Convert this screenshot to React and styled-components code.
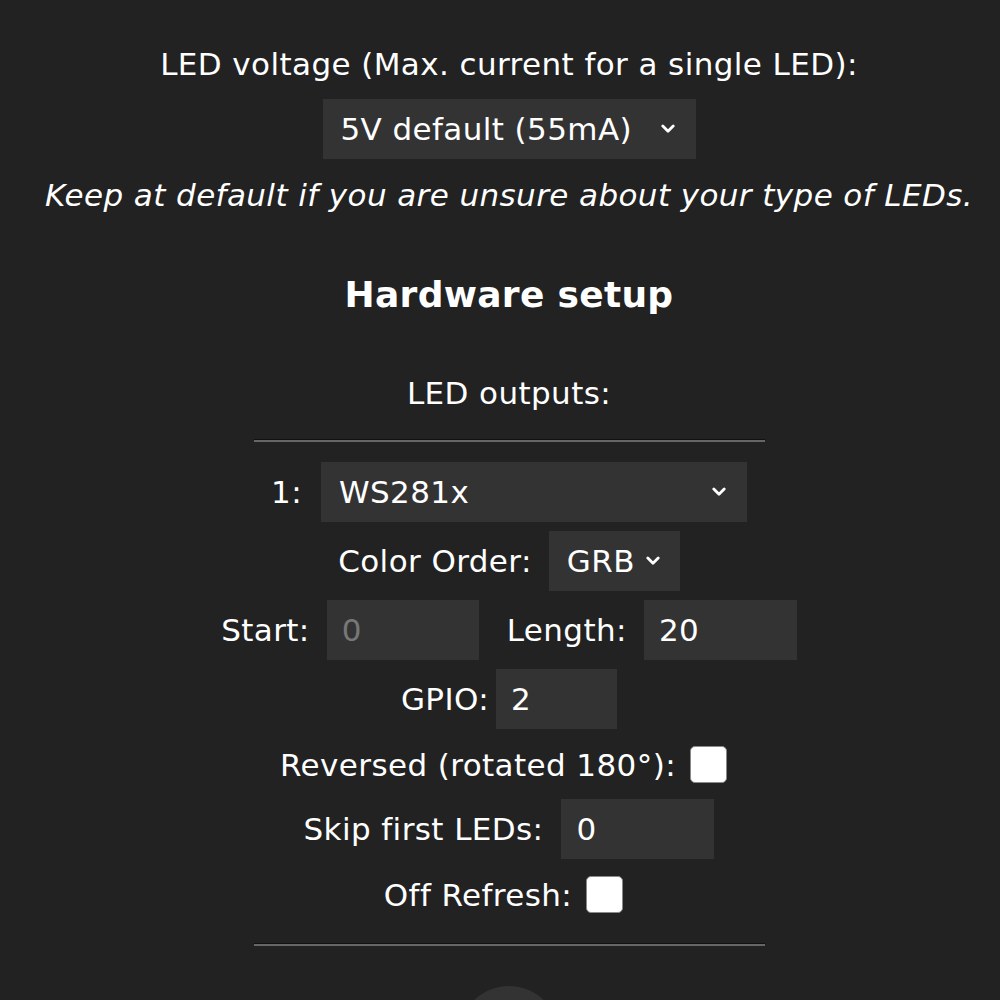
import React from "react";
import styled, { createGlobalStyle } from "styled-components";

const Global = createGlobalStyle`
  html, body { margin: 0; padding: 0; background: #222; }
  body {
    color: #fff;
    font-family: "DejaVu Sans", Verdana, "Liberation Sans", sans-serif;
    font-size: 31px;
    letter-spacing: 0.4px;
    overflow: hidden;
  }
`;

const Page = styled.div`
  width: 1000px;
  height: 1000px;
  box-sizing: border-box;
  padding: 46px 0 0 18px;
  display: flex;
  flex-direction: column;
  align-items: center;
  overflow: hidden;
`;

const Text = styled.div`
  line-height: 36px;
  text-align: center;
  white-space: nowrap;
  margin-top: ${(p) => p.$mt || 0}px;
  font-style: ${(p) => (p.$italic ? "italic" : "normal")};
`;

const Heading = styled.h3`
  margin: ${(p) => p.$mt || 0}px 0 0;
  font-size: 36px;
  letter-spacing: 0.3px;
  line-height: 42px;
  font-weight: bold;
`;

const Rule = styled.hr`
  width: 511px;
  height: 0;
  margin: ${(p) => p.$mt || 0}px 0 0;
  border: none;
  border-top: 1px solid #111;
  border-bottom: 2px solid #666;
`;

const Row = styled.div`
  display: flex;
  align-items: center;
  justify-content: center;
  margin-top: ${(p) => p.$mt ?? 9}px;
  white-space: nowrap;
`;

const Label = styled.span`
  margin-right: ${(p) => p.$gap ?? 17}px;
  margin-left: ${(p) => p.$lead || 0}px;
`;

const Select = styled.div`
  display: flex;
  align-items: center;
  justify-content: space-between;
  box-sizing: border-box;
  width: ${(p) => p.$w}px;
  height: 60px;
  padding: 0 ${(p) => p.$pr ?? 21}px 0 ${(p) => p.$pl ?? 18}px;
  background: #333;
  color: #fff;
`;

const Field = styled.input`
  box-sizing: border-box;
  width: ${(p) => p.$w}px;
  height: 60px;
  padding: 0 15px;
  border: none;
  outline: none;
  background: #333;
  color: ${(p) => (p.disabled ? "#777" : "#fff")};
  font-family: inherit;
  font-size: 31px;
  letter-spacing: 0.4px;
`;

const Check = styled.input`
  appearance: none;
  box-sizing: border-box;
  width: 37px;
  height: 37px;
  margin: 8px 11px 8px 0;
  background: #fff;
  border: 1px solid #8a8a8a;
  border-radius: 5px;
`;

const RoundButton = styled.button`
  margin-top: 40px;
  width: 100px;
  height: 100px;
  flex-shrink: 0;
  border: none;
  border-radius: 50%;
  background: #333;
`;

const Chevron = () => (
  <svg width="14" height="10" viewBox="0 0 14 10" aria-hidden="true">
    <path d="M1.8 2 L7 7.2 L12.2 2" fill="none" stroke="#fff" strokeWidth="2.8" strokeLinecap="round" strokeLinejoin="round" />
  </svg>
);

export default function App() {
  return (
    <>
      <Global />
      <Page>
        <Text>LED voltage (Max. current for a single LED):</Text>
        <Row $mt={17}>
          <Select $w={373} role="combobox">
            <span>5V default (55mA)</span>
            <Chevron />
          </Select>
        </Row>
        <Text $mt={18} $italic>Keep at default if you are unsure about your type of LEDs.</Text>
        <Heading $mt={61}>Hardware setup</Heading>
        <Text $mt={59}>LED outputs:</Text>
        <Rule $mt={28} />
        <Row $mt={20}>
          <Label $gap={19}>1:</Label>
          <Select $w={426} role="combobox">
            <span>WS281x</span>
            <Chevron />
          </Select>
        </Row>
        <Row>
          <Label>Color Order:</Label>
          <Select $w={131} $pl={18} $pr={20} role="combobox">
            <span>GRB</span>
            <Chevron />
          </Select>
        </Row>
        <Row>
          <Label>Start:</Label>
          <Field $w={152} disabled value="0" readOnly />
          <Label $lead={28}>Length:</Label>
          <Field $w={153} value="20" readOnly />
        </Row>
        <Row>
          <Label $gap={7}>GPIO:</Label>
          <Field $w={121} value="2" readOnly />
        </Row>
        <Row>
          <Label $gap={14}>Reversed (rotated 180°):</Label>
          <Check type="checkbox" />
        </Row>
        <Row $mt={8}>
          <Label $gap={18}>Skip first LEDs:</Label>
          <Field $w={153} value="0" readOnly />
        </Row>
        <Row>
          <Label $gap={14}>Off Refresh:</Label>
          <Check type="checkbox" />
        </Row>
        <Rule $mt={22} />
        <RoundButton type="button" aria-label="Add LED output" />
      </Page>
    </>
  );
}
